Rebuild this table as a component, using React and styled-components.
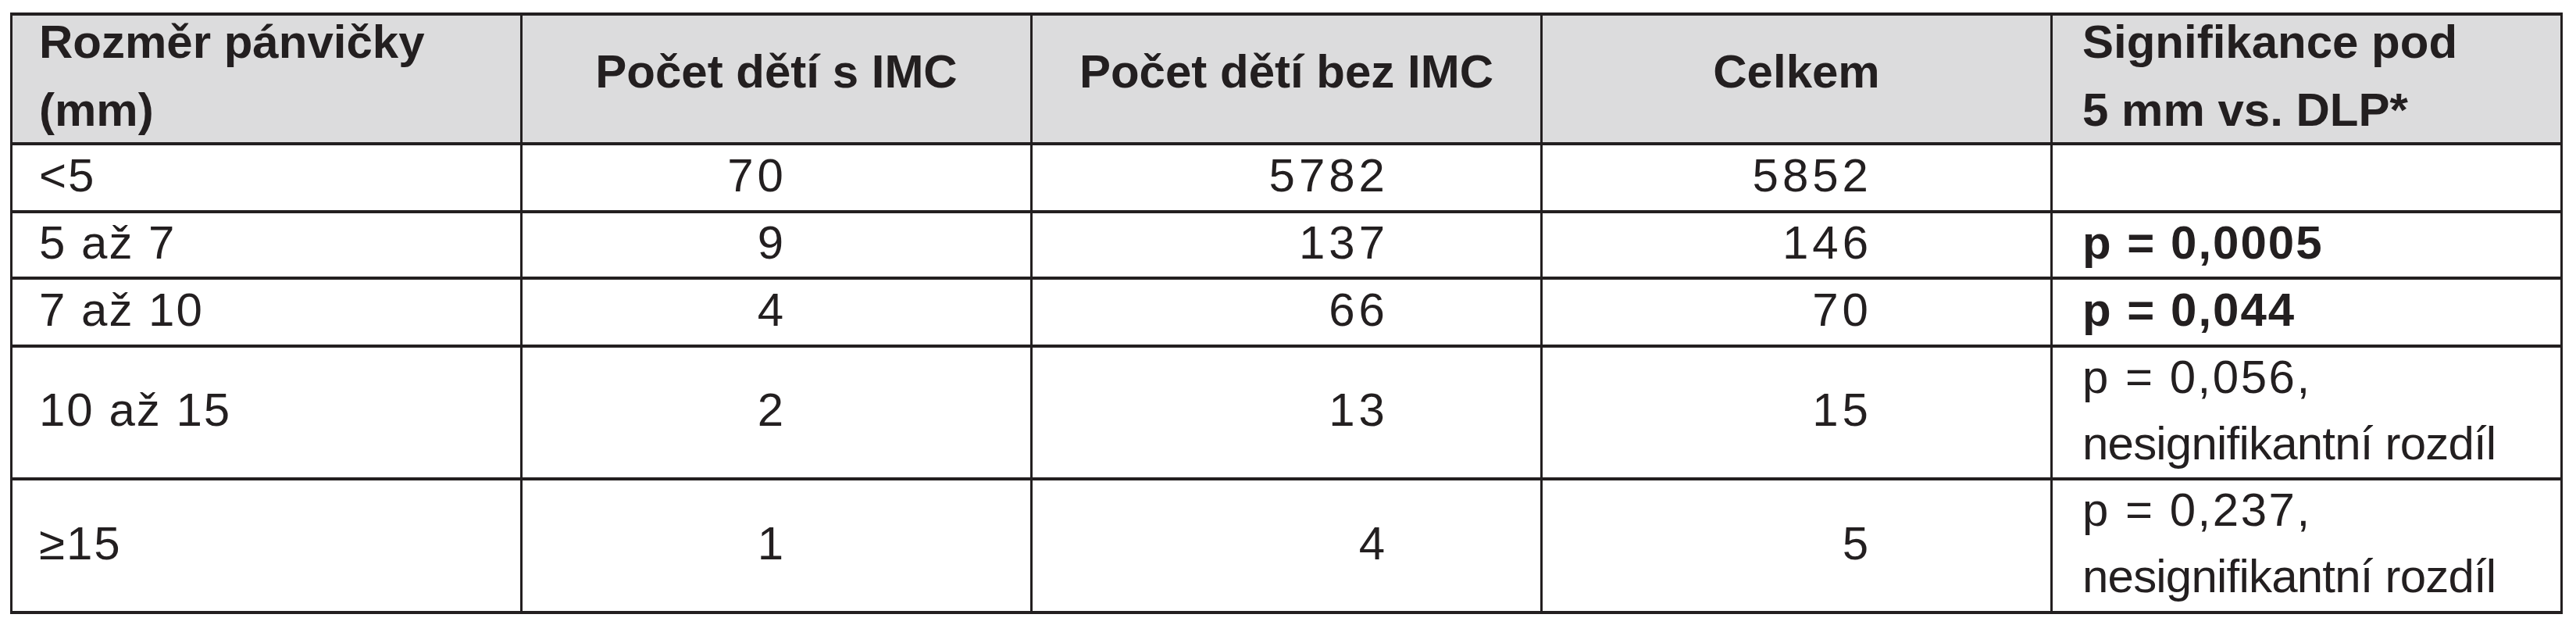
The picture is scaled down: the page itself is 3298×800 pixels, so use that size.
import React from "react";
import styled, { createGlobalStyle } from "styled-components";

const GlobalStyle = createGlobalStyle`
  body {
    margin: 0;
    background: #ffffff;
    font-family: "Liberation Sans", Arial, sans-serif;
    color: #231f20;
  }
`;

const rows = [
  { size: "<5", imc: "70", noImc: "5782", total: "5852", sig: null },
  { size: "5 až 7", imc: "9", noImc: "137", total: "146", sig: ["p = 0,0005"], bold: true },
  { size: "7 až 10", imc: "4", noImc: "66", total: "70", sig: ["p = 0,044"], bold: true },
  { size: "10 až 15", imc: "2", noImc: "13", total: "15", sig: ["p = 0,056,", "nesignifikantní rozdíl"] },
  { size: "≥15", imc: "1", noImc: "4", total: "5", sig: ["p = 0,237,", "nesignifikantní rozdíl"] },
];

const Page = styled.div`
  padding: 16px 0 0 13px;
`;

const Table = styled.div`
  width: 3268px;
  display: grid;
  grid-template-columns: repeat(5, 1fr);
  grid-template-rows: 162px 83px 81px 83px 166px 167px;
  row-gap: 4px;
  column-gap: 3px;
  padding: 4px 3px;
  box-sizing: border-box;
  background: #231f20;
`;

const HeadCell = styled.div`
  background: #dcdcdd;
  display: flex;
  flex-direction: column;
  justify-content: center;
  align-items: ${(p) => (p.$align === "left" ? "flex-start" : "center")};
  padding: 0 0 ${(p) => (p.$lines > 1 ? 8 : 20)}px ${(p) => (p.$align === "left" ? p.$pad : 0)}px;
  font-size: 60px;
  font-weight: 700;
  line-height: 87px;
  white-space: nowrap;
  overflow: visible;
`;

const Cell = styled.div`
  background: #ffffff;
  display: flex;
  flex-direction: column;
  justify-content: center;
  align-items: ${(p) => (p.$align === "right" ? "flex-end" : "flex-start")};
  padding: 0 ${(p) => p.$right || 0}px 7px ${(p) => p.$left || 0}px;
  font-size: 60px;
  line-height: 85px;
  white-space: nowrap;
`;

const Num = styled.span`
  letter-spacing: ${(p) => p.$spacing}px;
  font-weight: ${(p) => (p.$bold ? 700 : 400)};
`;

const Note = styled.span`
  letter-spacing: -0.8px;
`;

const App = () => (
  <Page>
    <GlobalStyle />
    <Table>
      <HeadCell $align="left" $pad={34} $lines={2}>
        <span>Rozměr pánvičky</span>
        <span>(mm)</span>
      </HeadCell>
      <HeadCell $lines={1}>Počet dětí s IMC</HeadCell>
      <HeadCell $lines={1}>Počet dětí bez IMC</HeadCell>
      <HeadCell $lines={1}>Celkem</HeadCell>
      <HeadCell $align="left" $pad={38} $lines={2}>
        <span>Signifikance pod</span>
        <span>5 mm vs. DLP*</span>
      </HeadCell>

      {rows.map((r) => (
        <React.Fragment key={r.size}>
          <Cell $left={34}>
            <Num $spacing={2}>{r.size}</Num>
          </Cell>
          <Cell $align="right" $right={311}>
            <Num $spacing={5}>{r.imc}</Num>
          </Cell>
          <Cell $align="right" $right={194}>
            <Num $spacing={5}>{r.noImc}</Num>
          </Cell>
          <Cell $align="right" $right={228}>
            <Num $spacing={5}>{r.total}</Num>
          </Cell>
          <Cell $left={38}>
            {r.sig && (
              <>
                <Num $spacing={r.bold ? 2 : 2.5} $bold={r.bold}>
                  {r.sig[0]}
                </Num>
                {r.sig[1] && <Note>{r.sig[1]}</Note>}
              </>
            )}
          </Cell>
        </React.Fragment>
      ))}
    </Table>
  </Page>
);

export default App;
